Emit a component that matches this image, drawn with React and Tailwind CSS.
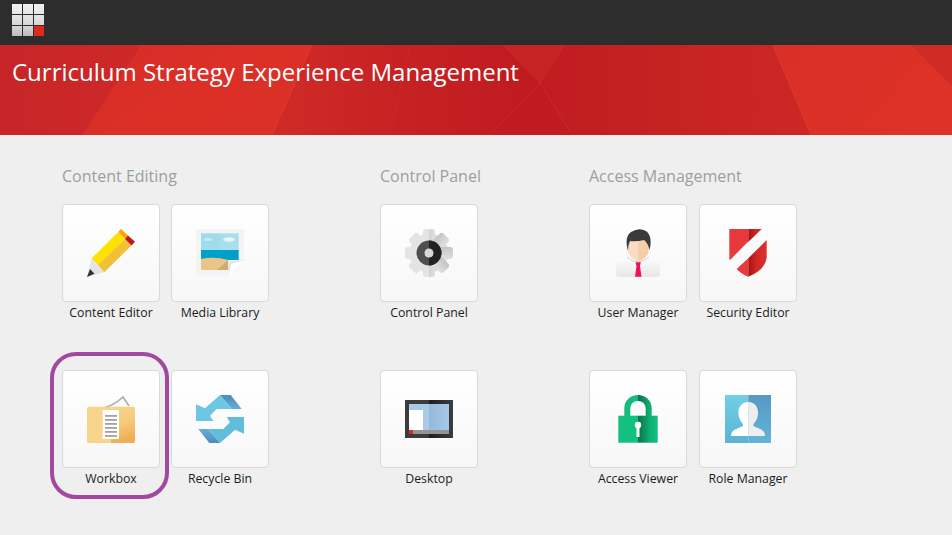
const font = "font-['Open_Sans',sans-serif]";

function Pencil() {
  return (
    <svg viewBox="0 0 48 48" className="w-12 h-12">
      <polygon points="4.7,29.3 17.3,43.3 0,48" fill="#e4e4e4" />
      <polygon points="0,48 3,40 7.5,44.8" fill="#333" />
      <polygon points="4.7,29.3 31.5,2.7 38,10 11,36" fill="#ffe100" />
      <polygon points="11,36 38,10 44.5,16.5 17.3,43.3" fill="#f2c035" />
      <polygon points="31.5,2.7 34,0 41,6.5 38,10" fill="#ff9f0a" />
      <polygon points="38,10 41,6.5 48,12.7 44.5,16.5" fill="#c01818" />
    </svg>
  );
}
function Media() {
  return (
    <svg viewBox="0 0 48 48" className="w-12 h-12">
      <polygon points="0,0 48,0 48,31 32.3,47.7 0,47.7" fill="#f4f4f4" />
      <rect x="5" y="4.3" width="19" height="17" fill="#9fdcec" />
      <rect x="24" y="4.3" width="18.7" height="17" fill="#a9dfec" />
      <rect x="5" y="21" width="37.7" height="10.5" fill="#00a0c8" />
      <path d="M5 30 Q18 27 32.3 31 V41 H5Z" fill="#e9c687" />
      <polygon points="32.3,31 20.7,41 32.3,41" fill="#cfac6e" />
      <rect x="32.3" y="31" width="10.4" height="10" fill="#f4f4f4" />
      <polygon points="32.3,47.7 48,31 33.5,33" fill="#ffffff" />
      <polygon points="32.3,47.7 33.5,33 48,31 46,32 35,34.5" fill="#dcdcdc" />
      <ellipse cx="12" cy="10.5" rx="4" ry="1.6" fill="#c8ecf4" />
      <ellipse cx="33" cy="10.5" rx="6" ry="2.2" fill="#e4f6fa" />
    </svg>
  );
}
function Workbox() {
  const ys = [20, 24, 28, 32, 36, 40];
  return (
    <svg viewBox="0 0 48 48" className="w-12 h-12">
      <defs>
        <linearGradient id="wb" x1="0" x2="0.2" y1="0" y2="1">
          <stop offset="0" stopColor="#f8d48a" />
          <stop offset="0.5" stopColor="#f6cb7c" />
          <stop offset="1" stopColor="#eeae55" />
        </linearGradient>
      </defs>
      <path d="M14.7 13.5 Q26 11 36 2 L42 11" fill="none" stroke="#a8a8a8" strokeWidth="1.5" />
      <path d="M2 11.7 H24 V48 H2 Q0 48 0 46 V13.7 Q0 11.7 2 11.7Z" fill="#f8d48c" />
      <path d="M24 11.7 H46 Q48 11.7 48 13.7 V46 Q48 48 46 48 H24Z" fill="url(#wb)" />
      <rect x="15.7" y="15" width="16.3" height="29" fill="#fff" />
      {ys.map((y) => (
        <rect key={y} x="18" y={y} width="12" height="1.8" fill="#a2a2a2" />
      ))}
    </svg>
  );
}
function Recycle() {
  const half = (a, b) => (
    <>
      <polygon points="24,0 34.7,0 45.7,14 35.7,14" fill={b} />
      <polygon points="24,0 9,13.3 0,9.3 0,26 17.3,26 14,20.7 20.7,14 35.7,14" fill={a} />
    </>
  );
  return (
    <svg viewBox="0 0 48 48" className="w-12 h-12">
      <defs>
        <linearGradient id="rc" x1="0" x2="0" y1="0" y2="1">
          <stop offset="0" stopColor="#4a8cbe" />
          <stop offset="1" stopColor="#69add6" />
        </linearGradient>
      </defs>
      <g>{half("#6cc8e2", "url(#rc)")}</g>
      <g transform="rotate(180 24 24)">{half("#62bcdc", "url(#rc)")}</g>
    </svg>
  );
}
function Gear() {
  const teeth = [0, 45, 90, 135];
  const shape = (
    <>
      <circle cx="24" cy="24" r="19.5" />
      {teeth.map((a) => (
        <rect key={a} x="18" y="0" width="12" height="48" rx="3" transform={`rotate(${a} 24 24)`} />
      ))}
    </>
  );
  return (
    <svg viewBox="0 0 48 48" className="w-12 h-12">
      <defs>
        <clipPath id="gl"><rect x="0" y="0" width="24" height="48" /></clipPath>
        <clipPath id="gr"><rect x="24" y="0" width="24" height="48" /></clipPath>
        <linearGradient id="gg" x1="0" x2="1" y1="0" y2="0">
          <stop offset="0" stopColor="#c4c4c4" />
          <stop offset="1" stopColor="#e0e0e0" />
        </linearGradient>
      </defs>
      <g fill="#e4e4e4" clipPath="url(#gl)">{shape}</g>
      <g fill="url(#gg)" clipPath="url(#gr)">{shape}</g>
      <circle cx="24" cy="24" r="12.5" fill="#4f4f4f" />
      <path d="M24 11.5 A12.5 12.5 0 0 1 24 36.5Z" fill="#222" />
      <circle cx="24" cy="24" r="4.5" fill="#d8d8d8" />
    </svg>
  );
}
function Desktop() {
  return (
    <svg viewBox="0 0 48 48" className="w-12 h-12">
      <defs>
        <linearGradient id="df" x1="0" x2="1" y1="0" y2="0">
          <stop offset="0" stopColor="#1e1e1e" />
          <stop offset="1" stopColor="#3e3e3e" />
        </linearGradient>
        <linearGradient id="ds" x1="0" x2="1" y1="0" y2="0">
          <stop offset="0" stopColor="#94b9dc" />
          <stop offset="1" stopColor="#a6c8e6" />
        </linearGradient>
      </defs>
      <rect x="0" y="5" width="24" height="38" fill="#3c3c3c" />
      <rect x="24" y="5" width="24" height="38" fill="url(#df)" />
      <rect x="4" y="9" width="20" height="26" fill="#a9c9e8" />
      <rect x="24" y="9" width="20" height="26" fill="url(#ds)" />
      <rect x="4" y="15" width="14" height="20" fill="#fff" />
      <rect x="4" y="35" width="40" height="4" fill="#949494" />
      <rect x="4" y="35" width="4" height="4" fill="#e0282a" />
    </svg>
  );
}
function User() {
  return (
    <svg viewBox="0 0 48 48" className="w-12 h-12">
      <defs>
        <linearGradient id="ub" x1="0" x2="0" y1="0" y2="1">
          <stop offset="0" stopColor="#fdfdfd" />
          <stop offset="1" stopColor="#e6e6e6" />
        </linearGradient>
      </defs>
      <path d="M1.7 45 V38 Q2 33 9 31 L18 28 H30 L39 31 Q46 33 46 38 V45 Q46 48 43 48 H5 Q2 48 1.7 45Z" fill="url(#ub)" />
      <path d="M13 28 Q24 38 35 28" fill="none" stroke="#cfcfcf" strokeWidth="1" />
      <ellipse cx="24.3" cy="19.5" rx="10.5" ry="12" fill="#fbdcc2" />
      <path d="M24.3 7.5 A10.5 12 0 0 1 24.3 31.5Z" fill="#f6cda9" />
      <path d="M14 22 Q10 8 17 3 Q25 -2 32 2 Q39 7 35.5 21 Q34 14 30 11 Q22 13 16 12 Q14 16 14 22Z" fill="#3a3a3a" />
      <polygon points="21.5,33.3 26.8,33.3 26,37 27.5,47.7 21,47.7 22.5,37" fill="#f0105a" />
    </svg>
  );
}
function Shield() {
  return (
    <svg viewBox="0 0 48 48" className="w-12 h-12">
      <defs>
        <linearGradient id="sh" gradientUnits="userSpaceOnUse" x1="24.3" x2="42.7" y1="0" y2="0">
          <stop offset="0" stopColor="#a91212" />
          <stop offset="0.45" stopColor="#cf2828" />
          <stop offset="1" stopColor="#dc3030" />
        </linearGradient>
      </defs>
      <polygon points="5.3,0 24.3,0 24.3,12.5 6,31 5.3,30" fill="#e83a3c" />
      <polygon points="24.3,0 37.7,0 24.3,13" fill="url(#sh)" />
      <path d="M24.3 29.2 V47.7 Q17 45 12.7 40Z" fill="#e83a3c" />
      <path d="M42.7 11 V29 Q41 41 24.3 47.7 V29.2Z" fill="url(#sh)" />
    </svg>
  );
}
function Lock() {
  return (
    <svg viewBox="0 0 48 48" className="w-12 h-12">
      <defs>
        <linearGradient id="lk" gradientUnits="userSpaceOnUse" x1="24" x2="43.7" y1="0" y2="0">
          <stop offset="0" stopColor="#07744c" />
          <stop offset="0.6" stopColor="#0faf72" />
          <stop offset="1" stopColor="#12c080" />
        </linearGradient>
      </defs>
      <path d="M13.3 22 V13 A10.7 10 0 0 1 24 3" fill="none" stroke="#14bd7e" strokeWidth="6" />
      <path d="M24 3 A10.7 10 0 0 1 34.7 13 V22" fill="none" stroke="url(#lk)" strokeWidth="6" />
      <rect x="4.3" y="20.7" width="19.7" height="27" fill="#12c080" />
      <rect x="24" y="20.7" width="19.7" height="27" fill="url(#lk)" />
      <circle cx="24" cy="30" r="3.2" fill="#fff" />
      <rect x="22.5" y="30" width="3" height="12" fill="#fff" />
    </svg>
  );
}
function Role() {
  return (
    <svg viewBox="0 0 48 48" className="w-12 h-12">
      <defs>
        <linearGradient id="rl" x1="0" x2="0" y1="0" y2="1">
          <stop offset="0" stopColor="#72cfe5" />
          <stop offset="1" stopColor="#5cb3d2" />
        </linearGradient>
        <linearGradient id="rr" x1="0" x2="0" y1="0" y2="1">
          <stop offset="0" stopColor="#5699c4" />
          <stop offset="1" stopColor="#64b4d8" />
        </linearGradient>
      </defs>
      <rect x="1" y="0" width="23.3" height="48" fill="url(#rl)" />
      <rect x="24.3" y="0" width="22.7" height="48" fill="url(#rr)" />
      <path d="M24.3 7 C17 7 14 13 14.5 19 C15 24 17 27 19 29 V31 C14 34 7 34 7 41 H24.3Z" fill="#fff" />
      <path d="M24.3 7 C31.5 7 34.5 13 34 19 C33.5 24 31.5 27 29.5 29 V31 C34.5 34 41 34 41 41 H24.3Z" fill="#eeeeee" />
    </svg>
  );
}

function Tile({ label, icon: Icon, ring, pitch }) {
  return (
    <div className={`relative ${pitch} shrink-0`}>
      <div className="w-[98px] h-[98px] rounded-[4px] border border-[#d9d9d9] bg-gradient-to-b from-white to-[#f7f7f7] flex items-center justify-center">
        <Icon />
      </div>
      <div className="w-[98px] mt-[2px] h-[18px] leading-[18px] text-center text-[12.3px] text-[#1c1c1c] whitespace-nowrap">{label}</div>
      {ring && (
        <div className="absolute left-[-12px] top-[-18px] w-[119px] h-[147px] rounded-[26px] border-4 border-[#a3489f]"></div>
      )}
    </div>
  );
}

const groups = [
  {
    title: "Content Editing",
    width: "w-[318px]",
    pitch: "w-[109px]",
    rows: [
      [{ label: "Content Editor", icon: Pencil }, { label: "Media Library", icon: Media }],
      [{ label: "Workbox", icon: Workbox, ring: true }, { label: "Recycle Bin", icon: Recycle }],
    ],
  },
  {
    title: "Control Panel",
    width: "w-[209px]",
    pitch: "w-[109px]",
    rows: [[{ label: "Control Panel", icon: Gear }], [{ label: "Desktop", icon: Desktop }]],
  },
  {
    title: "Access Management",
    width: "w-[220px]",
    pitch: "w-[110px]",
    rows: [
      [{ label: "User Manager", icon: User }, { label: "Security Editor", icon: Shield }],
      [{ label: "Access Viewer", icon: Lock }, { label: "Role Manager", icon: Role }],
    ],
  },
];

function BannerArt() {
  return (
    <svg className="absolute inset-0 w-full h-full" viewBox="0 0 952 90" preserveAspectRatio="none">
      <defs>
        <linearGradient id="bg" x1="0" x2="1" y1="0" y2="0">
          <stop offset="0" stopColor="#c72528" />
          <stop offset="0.12" stopColor="#cd2828" />
          <stop offset="0.3" stopColor="#d02a27" />
          <stop offset="0.42" stopColor="#c62223" />
          <stop offset="0.55" stopColor="#c01c20" />
          <stop offset="0.7" stopColor="#c52222" />
          <stop offset="0.8" stopColor="#ca2625" />
          <stop offset="1" stopColor="#d02a26" />
        </linearGradient>
        <linearGradient id="md" x1="0" x2="1" y1="0" y2="0.6">
          <stop offset="0" stopColor="#d42c27" />
          <stop offset="0.6" stopColor="#dc3027" />
          <stop offset="1" stopColor="#db3027" />
        </linearGradient>
        <linearGradient id="rt" x1="0" x2="1" y1="0" y2="0.4">
          <stop offset="0" stopColor="#d73027" />
          <stop offset="1" stopColor="#de3127" />
        </linearGradient>
      </defs>
      <rect width="952" height="90" fill="url(#bg)" />
      <polygon points="142,0 312,0 272,90 83,90" fill="url(#md)" />
      <polygon points="773,0 952,0 952,90 811,90" fill="url(#rt)" />
      <polygon points="910,0 952,0 952,42" fill="#d02c26" />
      <polygon points="540,38 572,90 490,90" fill="#bf1b20" />
      <polygon points="540,38 564,0 503,0" fill="#c62324" />
      <g fill="none" strokeWidth="1">
        <path d="M142 0 L83 90" stroke="#d8332b" />
        <path d="M312 0 L272 90" stroke="#e13a2c" />
        <path d="M410 0 L390 90" stroke="#c92926" />
        <path d="M503 0 L540 38 L490 90" stroke="#ca2a27" />
        <path d="M564 0 L540 38 L572 90" stroke="#cc2c27" />
        <path d="M687 0 L790 90" stroke="#c82725" />
        <path d="M700 40 L706 90" stroke="#c82725" />
        <path d="M773 0 L811 90" stroke="#e13a2c" />
        <path d="M910 0 L952 42" stroke="#e0382b" />
      </g>
    </svg>
  );
}

const logoCells = [
  "from-[#f2f2f2] to-[#e6e6e6]", "from-[#f2f2f2] to-[#e6e6e6]", "from-[#f2f2f2] to-[#e6e6e6]",
  "from-[#e6e6e6] to-[#d6d6d6]", "from-[#e6e6e6] to-[#d6d6d6]", "from-[#e6e6e6] to-[#d6d6d6]",
  "from-[#d6d6d6] to-[#bcbcbc]", "from-[#d6d6d6] to-[#bcbcbc]",
];

export default function App() {
  return (
    <div className={`${font} w-[952px] h-[535px] overflow-hidden bg-[#efefef]`}>
      <div className="h-[45px] bg-[#2d2d2d] pl-3 pt-1">
        <div className="grid grid-cols-3 gap-px w-[32px]">
          {logoCells.map((c, i) => (
            <div key={i} className={`w-[10px] h-[10px] bg-gradient-to-b ${c}`}></div>
          ))}
          <div className="w-[10px] h-[10px] bg-[#e0281f]"></div>
        </div>
      </div>
      <div className="relative h-[90px] overflow-hidden">
        <BannerArt />
        <h1 className="relative pl-3 pt-[9px] text-[24px] leading-[36px] font-normal text-white">
          Curriculum Strategy Experience Management
        </h1>
      </div>
      <div className="flex pl-[62px] pt-[29px]">
        {groups.map((g) => (
          <div key={g.title} className={`${g.width} shrink-0`}>
            <h2 className="h-[24px] leading-[24px] text-[16px] font-normal text-[#9a9fa3] mb-4">{g.title}</h2>
            <div className="flex flex-col gap-[48px]">
              {g.rows.map((row, i) => (
                <div key={i} className="flex">
                  {row.map((t) => (
                    <Tile key={t.label} {...t} pitch={g.pitch} />
                  ))}
                </div>
              ))}
            </div>
          </div>
        ))}
      </div>
    </div>
  );
}
